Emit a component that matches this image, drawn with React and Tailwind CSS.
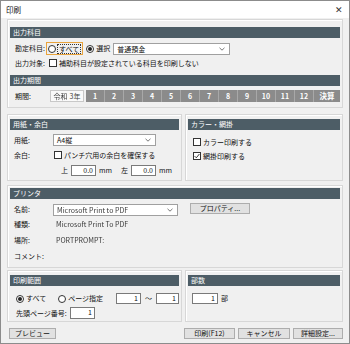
import React from 'react';

const Header = ({ children, className = '' }) => (
  <div className={`h-[11px] bg-[#4d5d66] text-white text-[7px] leading-[11px] pl-[3px] ${className}`}>
    {children}
  </div>
);

const Panel = ({ children, className = '' }) => (
  <div className={`border border-[#d7d7d7] shadow-[inset_1px_1px_0_#fff] px-[2px] ${className}`}>
    {children}
  </div>
);

const Radio = ({ checked }) => (
  <span className="w-[8px] h-[8px] rounded-full border border-[#333] bg-white flex items-center justify-center shrink-0">
    {checked && <span className="w-[4px] h-[4px] rounded-full bg-[#222]" />}
  </span>
);

const Check = ({ checked }) => (
  <span className="w-[8px] h-[8px] border border-[#333] bg-white flex items-center justify-center shrink-0">
    {checked && (
      <svg width="6" height="6" viewBox="0 0 6 6">
        <path d="M0.6 3.1 L2.3 4.8 L5.4 1" fill="none" stroke="#222" strokeWidth="0.9" />
      </svg>
    )}
  </span>
);

const Chevron = () => (
  <svg width="6" height="4" viewBox="0 0 6 4" className="shrink-0">
    <path d="M0.5 0.8 L3 3.2 L5.5 0.8" fill="none" stroke="#555" strokeWidth="0.8" />
  </svg>
);

const Select = ({ children, className = '' }) => (
  <div className={`h-[12px] bg-white border border-[#a0a0a0] flex items-center justify-between pl-[3px] pr-[4px] ${className}`}>
    <span className="leading-[10px]">{children}</span>
    <Chevron />
  </div>
);

const Num = ({ value, className = '' }) => (
  <div className={`h-[11px] bg-white border border-[#7a7a7a] text-right pr-[2px] leading-[9px] ${className}`}>
    {value}
  </div>
);

const Btn = ({ children, className = '' }) => (
  <div className={`h-[11px] bg-[#e1e1e1] border border-[#adadad] flex items-center justify-center ${className}`}>
    {children}
  </div>
);

const Blur = ({ children }) => <span className="blur-[0.6px] text-[#3a3a3a]">{children}</span>;

export default function App() {
  const months = ['1', '2', '3', '4', '5', '6', '7', '8', '9', '10', '11', '12'];
  return (
    <div className="w-[350px] h-[344px] bg-[#f0f0f0] border border-[#8c8c8c] flex flex-col font-['Noto_Sans_CJK_JP','Noto_Sans',sans-serif] text-[7px] text-[#111] leading-none whitespace-nowrap overflow-hidden">
      {/* title bar */}
      <div className="h-[17px] bg-white flex items-center justify-between pl-[5px] pr-[6px] shrink-0">
        <span className="text-[7.5px]">印刷</span>
        <span className="text-[9px] text-[#333]">✕</span>
      </div>

      <div className="flex flex-col px-[6px] pt-[1px]">
        {/* 出力科目 / 出力期間 */}
        <Panel className="pt-[7px] pb-[5px]">
          <Header>出力科目</Header>
          <div className="h-[13px] mt-[4px] flex items-center">
            <span className="w-[36px] pl-[5px]">勘定科目:</span>
            <div className="h-[13px] border border-[#e8a33c] flex items-center gap-[1px] px-[1px]">
              <Radio />
              <span className="border border-dotted border-[#333] px-[1px] leading-[8px]">すべて</span>
            </div>
            <div className="flex items-center gap-[2px] ml-[3px]">
              <Radio checked />
              <span>選択</span>
            </div>
            <Select className="w-[117px] ml-[3px]">普通預金</Select>
          </div>
          <div className="h-[14px] mt-[1px] flex items-center">
            <span className="w-[39px] pl-[5px]">出力対象:</span>
            <div className="flex items-center gap-[2px]">
              <Check />
              <span>補助科目が設定されている科目を印刷しない</span>
            </div>
          </div>
          <Header className="mt-[5px]">出力期間</Header>
          <div className="h-[12px] mt-[4px] flex items-center">
            <span className="w-[40px] pl-[5px]">期間:</span>
            <div className="w-[34px] h-[12px] bg-[#fafafa] border border-[#c8c8c8] flex items-center justify-center gap-[2px]">
              <Blur>令和</Blur>
              <span className="text-[#444]">3年</span>
            </div>
            <div className="flex-1 h-[12px] ml-[2px] flex bg-[#8b8b8b]">
              {months.map((m) => (
                <div key={m} className="w-[19px] h-full border-r border-[#a8a8a8] text-white font-bold flex items-center justify-center">
                  {m}
                </div>
              ))}
              <div className="flex-1 h-full text-white font-bold flex items-center justify-center text-[7.5px]">決算</div>
            </div>
          </div>
        </Panel>

        {/* 用紙・余白 / カラー・網掛 */}
        <div className="flex gap-[3px] mt-[6px]">
          <Panel className="w-[175px] h-[67px] pt-[4px]">
            <Header>用紙・余白</Header>
            <div className="h-[12px] mt-[4px] flex items-center">
              <span className="w-[43px] pl-[4px]">用紙:</span>
              <Select className="w-[103px]">A4縦</Select>
            </div>
            <div className="h-[12px] mt-[3px] flex items-center">
              <span className="w-[44px] pl-[4px]">余白:</span>
              <Check />
              <span className="ml-[2px]">パンチ穴用の余白を確保する</span>
            </div>
            <div className="h-[12px] mt-[3px] flex items-center">
              <span className="ml-[51px]">上</span>
              <Num value="0.0" className="w-[25px] ml-[3px]" />
              <span className="ml-[3px]">mm</span>
              <span className="ml-[9px]">左</span>
              <Num value="0.0" className="w-[25px] ml-[3px]" />
              <span className="ml-[3px]">mm</span>
            </div>
          </Panel>
          <Panel className="flex-1 h-[67px] pt-[4px]">
            <Header>カラー・網掛</Header>
            <div className="h-[12px] mt-[6px] flex items-center pl-[5px] gap-[2px]">
              <Check />
              <span>カラー印刷する</span>
            </div>
            <div className="h-[12px] mt-[2px] flex items-center pl-[5px] gap-[2px]">
              <Check checked />
              <span>網掛印刷する</span>
            </div>
          </Panel>
        </div>

        {/* プリンタ */}
        <Panel className="h-[83px] mt-[4px] pt-[2px]">
          <Header>プリンタ</Header>
          <div className="h-[13px] mt-[4px] flex items-center">
            <span className="w-[43px] pl-[4px]">名前:</span>
            <Select className="w-[125px]"><Blur>Microsoft Print to PDF</Blur></Select>
            <Btn className="w-[60px] ml-[12px] -mt-[2px]">プロパティ...</Btn>
          </div>
          <div className="h-[12px] mt-[2px] flex items-center">
            <span className="w-[46px] pl-[4px]">種類:</span>
            <Blur>Microsoft Print To PDF</Blur>
          </div>
          <div className="h-[12px] mt-[4px] flex items-center">
            <span className="w-[46px] pl-[4px]">場所:</span>
            <Blur>PORTPROMPT:</Blur>
          </div>
          <div className="h-[12px] mt-[4px] flex items-center">
            <span className="pl-[4px]">コメント:</span>
          </div>
        </Panel>

        {/* 印刷範囲 / 部数 */}
        <div className="flex gap-[3px] mt-[2px]">
          <Panel className="w-[175px] h-[52px] pt-[4px]">
            <Header className="h-[10px] leading-[10px]">印刷範囲</Header>
            <div className="h-[11px] mt-[7px] flex items-center">
              <div className="flex items-center gap-[2px] ml-[6px]">
                <Radio checked />
                <span>すべて</span>
              </div>
              <div className="flex items-center gap-[2px] ml-[12px]">
                <Radio />
                <span>ページ指定</span>
              </div>
              <Num value="1" className="w-[28px] ml-[13px]" />
              <span className="mx-[4px]">～</span>
              <Num value="1" className="w-[26px]" />
            </div>
            <div className="h-[12px] mt-[3px] flex items-center">
              <span className="pl-[6px]">先頭ページ番号:</span>
              <Num value="1" className="w-[25px] ml-[3px] h-[12px]" />
            </div>
          </Panel>
          <Panel className="flex-1 h-[52px] pt-[4px]">
            <Header className="h-[10px] leading-[10px]">部数</Header>
            <div className="h-[11px] mt-[7px] flex items-center pl-[4px]">
              <Num value="1" className="w-[26px]" />
              <span className="ml-[3px]">部</span>
            </div>
          </Panel>
        </div>

        {/* buttons */}
        <div className="flex mt-[6px] items-center">
          <Btn className="w-[47px] ml-[2px]">プレビュー</Btn>
          <Btn className="w-[51px] ml-auto border-[#0078d7]">印刷(F12)</Btn>
          <Btn className="w-[52px] ml-[3px]">キャンセル</Btn>
          <Btn className="w-[50px] ml-[3px]">詳細設定...</Btn>
        </div>
      </div>
    </div>
  );
}
